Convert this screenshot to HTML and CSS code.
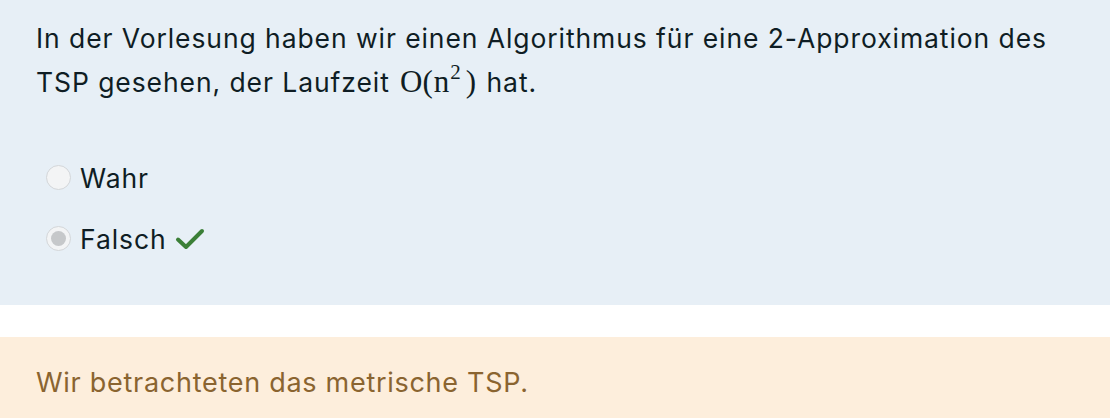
FILE: index.html
```html
<!DOCTYPE html>
<html lang="de">
<head>
<meta charset="utf-8">
<link rel="stylesheet" href="styles.css">
</head>
<body>
<div class="formulation">
  <div class="qtext">In der Vorlesung haben wir einen Algorithmus für eine 2-Approximation des TSP gesehen, der Laufzeit <span class="math"><span class="mo">O</span>(<span class="mn">n</span><sup>2</sup>)</span> hat.</div>
  <div class="answer">
    <div class="option">
      <span class="radio"></span>
      <span class="label">Wahr</span>
    </div>
    <div class="option">
      <span class="radio checked"></span>
      <span class="label">Falsch</span>
      <svg class="check" width="30" height="24" viewBox="0 0 30 24"><polyline points="3,12.5 11,20 27,4" fill="none" stroke="#3b7f37" stroke-width="4" stroke-linecap="round" stroke-linejoin="round"/></svg>
    </div>
  </div>
</div>
<div class="outcome">
  <div class="feedback">Wir betrachteten das metrische TSP.</div>
</div>
</body>
</html>
```
FILE: styles.css
```css
html, body {
  margin: 0;
  padding: 0;
  background: #ffffff;
}
body {
  font-family: "Inter", "Noto Sans", sans-serif;
  font-size: 26.5px;
  letter-spacing: 0.92px;
  line-height: 44px;
}
.formulation {
  background: #e7eff6;
  color: #0f1d24;
  padding: 16px 36px 36px 36px;
}
.qtext {
  max-width: 1040px;
}
.math {
  font-family: "Liberation Serif", "DejaVu Serif", serif;
  font-size: 31px;
  letter-spacing: 0;
  margin-left: 2px;
  margin-right: 2px;
}
.math .mn {
  margin-left: 1px;
}
.math sup {
  font-size: 21px;
  vertical-align: 13px;
  line-height: 0;
  margin-left: 1px;
  margin-right: 5px;
}
.answer {
  margin-top: 43px;
}
.option {
  display: flex;
  align-items: center;
  height: 61px;
}
.radio {
  box-sizing: border-box;
  width: 25px;
  height: 25px;
  border-radius: 50%;
  border: 1.5px solid #d3d6d9;
  background: #f3f4f5;
  margin-left: 10px;
  margin-right: 9px;
  display: flex;
  align-items: center;
  justify-content: center;
}
.radio.checked::after {
  content: "";
  width: 15px;
  height: 15px;
  border-radius: 50%;
  background: #c6c8ca;
}
.check {
  margin-left: 8px;
}
.outcome {
  margin-top: 32px;
  background: #fdeedc;
  color: #8a6430;
  font-size: 27px;
  letter-spacing: 0.72px;
  padding: 24px 36px 30px 36px;
}
```
